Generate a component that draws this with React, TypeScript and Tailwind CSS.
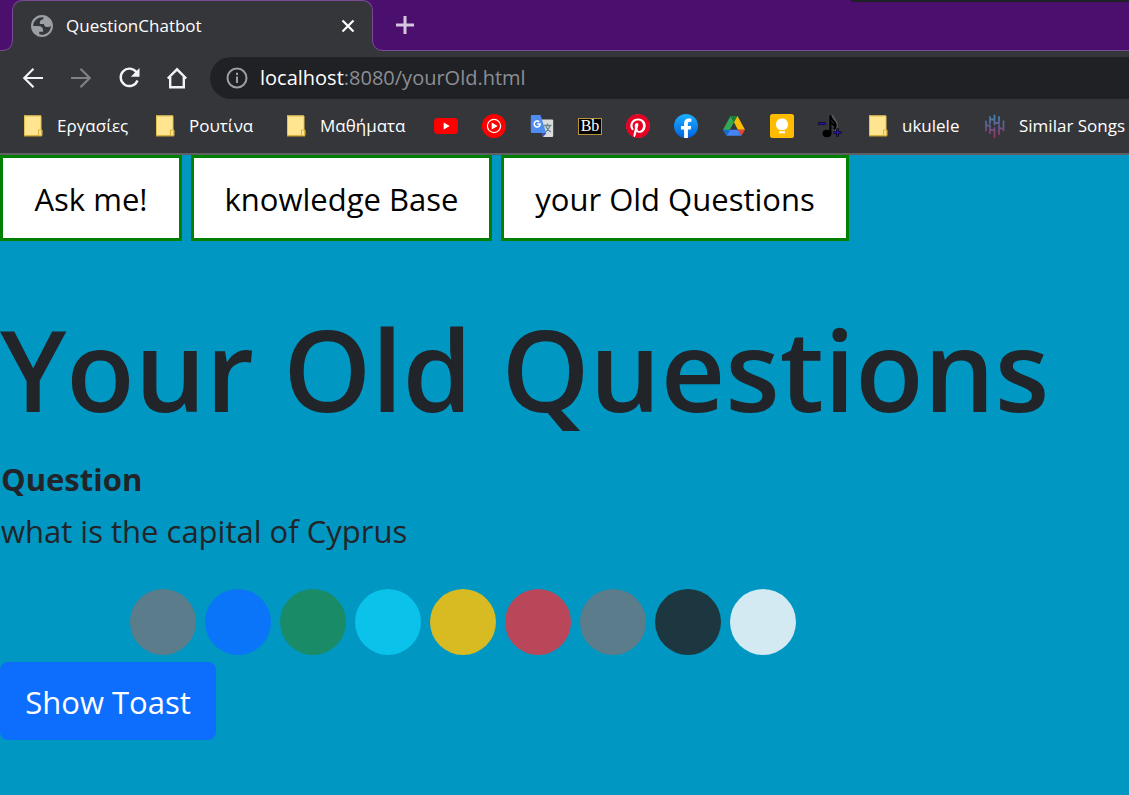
import type { ReactNode } from "react";

const uiFont = "font-['Open_Sans','Noto_Sans',sans-serif]";

function FolderIcon() {
  return (
    <svg className="size-6 shrink-0" viewBox="0 0 24 24" aria-hidden="true">
      <path d="M3 1.5h17v14.5l1 0v5.500H3z" fill="#ffe590" />
      <path d="M3.500 1.500V21.500H21V16h-1V2H3.500" fill="none" stroke="#e3c04f" strokeWidth="1" />
      <path d="M17.500 21.500V16h3v5.500" fill="#ffe590" stroke="#dcb23a" strokeWidth="1" />
      <path d="M3 22h18" stroke="#caa02e" strokeWidth="1" />
    </svg>
  );
}

function YoutubeIcon() {
  return (
    <svg className="size-6 shrink-0" viewBox="0 0 24 24" aria-hidden="true">
      <rect x="0" y="4" width="24" height="16" rx="4" fill="#f00" />
      <path d="M9.700 8.600v6.800l6-3.400z" fill="#fff" />
    </svg>
  );
}

function YoutubeMusicIcon() {
  return (
    <svg className="size-6 shrink-0" viewBox="0 0 24 24" aria-hidden="true">
      <circle cx="12" cy="12" r="12" fill="#f00" />
      <circle cx="12" cy="12" r="6.600" fill="none" stroke="#fff" strokeWidth="1.200" />
      <path d="M9.700 8.400v7.200l6-3.600z" fill="#fff" />
    </svg>
  );
}

function TranslateIcon() {
  return (
    <svg className="size-6 shrink-0" viewBox="0 0 24 24" aria-hidden="true">
      <path d="M10 5.500h12a1.200 1.200 0 0 1 1.200 1.200v15.100a1.200 1.200 0 0 1-1.200 1.200H13z" fill="#dcdcdc" />
      <path d="M12 19h4.500L13 23z" fill="#3a4fc4" />
      <path d="M13.500 11.500h8M17.500 9.500v2M20 11.500c-.5 2.800-2.400 4.800-4.500 6.500M16 12.500c.8 2 2.500 4 4.800 5.500" fill="none" stroke="#66858c" strokeWidth="1.300" />
      <path d="M2 1h8.500l5.700 18H2A1.200 1.200 0 0 1 .8 17.800V2.200A1.200 1.200 0 0 1 2 1z" fill="#4f8cf0" />
      <path d="M9.300 7.900A3 3 0 1 0 10.200 10H7.200" fill="none" stroke="#fff" strokeWidth="1.500" />
    </svg>
  );
}

function BlackboardIcon() {
  return (
    <span className="flex size-6 shrink-0 items-center">
      <span className="flex h-[17px] w-6 items-center justify-center border border-[#b99438] bg-black font-['Liberation_Serif',serif] text-base leading-none text-white">
        Bb
      </span>
    </span>
  );
}

function PinterestIcon() {
  return (
    <svg className="size-6 shrink-0" viewBox="0 0 24 24" aria-hidden="true">
      <circle cx="12" cy="12" r="11.500" fill="#fff" />
      <path
        d="M12.017 0C5.396 0 .029 5.367.029 11.987c0 5.079 3.158 9.417 7.618 11.162-.105-.949-.199-2.403.041-3.439.219-.937 1.406-5.957 1.406-5.957s-.359-.72-.359-1.781c0-1.663.967-2.911 2.168-2.911 1.024 0 1.518.769 1.518 1.688 0 1.029-.653 2.567-.992 3.992-.285 1.193.6 2.165 1.775 2.165 2.128 0 3.768-2.245 3.768-5.487 0-2.861-2.063-4.869-5.008-4.869-3.410 0-5.409 2.562-5.409 5.199 0 1.033.394 2.143.889 2.741.099.120.112.225.085.345-.090.375-.293 1.199-.334 1.363-.053.225-.172.271-.401.165-1.495-.690-2.433-2.878-2.433-4.646 0-3.776 2.748-7.252 7.920-7.252 4.158 0 7.392 2.967 7.392 6.923 0 4.135-2.607 7.462-6.233 7.462-1.214 0-2.354-.629-2.758-1.379l-.749 2.848c-.269 1.045-1.004 2.352-1.498 3.146 1.123.345 2.306.535 3.550.535 6.607 0 11.985-5.365 11.985-11.987C23.970 5.390 18.592.026 11.985.026z"
        fill="#e60023"
      />
    </svg>
  );
}

function FacebookIcon() {
  return (
    <svg className="size-6 shrink-0" viewBox="0 0 24 24" aria-hidden="true">
      <defs>
        <linearGradient id="fb" x1="0" y1="0" x2="0" y2="1">
          <stop offset="0" stopColor="#1aafff" />
          <stop offset="1" stopColor="#0163e0" />
        </linearGradient>
      </defs>
      <circle cx="12" cy="12" r="12" fill="url(#fb)" />
      <path d="M16.700 15.500l.5-3.500h-3.300V9.700c0-1 .5-1.900 2-1.900h1.500v-3s-1.400-.2-2.700-.2c-2.800 0-4.600 1.700-4.600 4.700V12H7v3.500h3.100v8.400a12 12 0 0 0 3.800 0v-8.400z" fill="#fff" />
    </svg>
  );
}

function DriveIcon() {
  return (
    <svg className="size-6 shrink-0" viewBox="0 0 24 24" aria-hidden="true">
      <path d="M8.500 2L12 8.300 4.500 21.500 1 15.700z" fill="#34a853" />
      <path d="M8.500 2h7L12 8.300z" fill="#188038" />
      <path d="M15.500 2L23 15.700h-7.100L12 8.300z" fill="#fbbc04" />
      <path d="M8 15.700h8l3.500 6H4.500z" fill="#4285f4" />
      <path d="M1 15.700h7l-3.500 6z" fill="#1967d2" />
      <path d="M15.900 15.700H23l-3.500 6z" fill="#ea4335" />
    </svg>
  );
}

function KeepIcon() {
  return (
    <svg className="size-6 shrink-0" viewBox="0 0 24 24" aria-hidden="true">
      <rect width="24" height="24" rx="2.500" fill="#ffbb00" />
      <path d="M12 4.500a6 6 0 0 0-3.200 11.100V16h6.400v-.4A6 6 0 0 0 12 4.500zM9 17.200h6v2H9z" fill="#fff" />
    </svg>
  );
}

function TransposeIcon() {
  return (
    <svg className="size-6 shrink-0" viewBox="0 0 24 24" aria-hidden="true">
      <path d="M13.500 1c.5 4 5 5.500 5 10 0 2.500-1 4-2.500 5.500" fill="none" stroke="#5c5d61" strokeWidth="3" />
      <path d="M11 .800h2.800v19H11z" fill="#000" stroke="#4d4e52" strokeWidth="0.500" />
      <path d="M13 3c1 4 4.800 4.500 4.800 8.500 0 2-1 3-2 4M13 8c1 2.500 3.500 2.500 4.500 5" fill="none" stroke="#000" strokeWidth="2" />
      <ellipse cx="9" cy="19.500" rx="4.500" ry="3.700" fill="#000" />
      <path d="M0 9.500h7.500M15.500 18.500h8M19.500 14.500v8" stroke="#000" strokeWidth="2.600" />
      <path d="M.5 9.500h6.500M16 18.500h7M19.500 15v7" stroke="#2b14b4" strokeWidth="1.400" />
    </svg>
  );
}

function SimilarSongsIcon() {
  return (
    <svg className="size-6 shrink-0" viewBox="0 0 24 24" aria-hidden="true">
      <defs>
        <linearGradient id="songs" gradientUnits="userSpaceOnUse" x1="0" y1="0" x2="0" y2="24">
          <stop offset="0" stopColor="#3f86b4" />
          <stop offset="0.500" stopColor="#5d5c8c" />
          <stop offset="1" stopColor="#a52a62" />
        </linearGradient>
      </defs>
      <path d="M3 7.500v9M7 3v6M7 12v7M11.500 1.500v9M11.500 14v9M16 3v5M16 11v9M20.500 7.500v9M3 11.500h4M7 5.500h4.500M11.500 9h4.500M7 16h4.500M16 14.500h4.500" stroke="url(#songs)" strokeWidth="1.800" strokeLinecap="round" fill="none" />
    </svg>
  );
}

type Bookmark = { name: string; icon: ReactNode; label?: string; width?: string };

const bookmarks: Bookmark[] = [
  { name: "Εργασίες", label: "Εργασίες", width: "w-[72px]", icon: <FolderIcon /> },
  { name: "Ρουτίνα", label: "Ρουτίνα", width: "w-[71px]", icon: <FolderIcon /> },
  { name: "Μαθήματα", label: "Μαθήματα", width: "w-[90px]", icon: <FolderIcon /> },
  { name: "YouTube", icon: <YoutubeIcon /> },
  { name: "YouTube Music", icon: <YoutubeMusicIcon /> },
  { name: "Google Translate", icon: <TranslateIcon /> },
  { name: "Blackboard", icon: <BlackboardIcon /> },
  { name: "Pinterest", icon: <PinterestIcon /> },
  { name: "Facebook", icon: <FacebookIcon /> },
  { name: "Google Drive", icon: <DriveIcon /> },
  { name: "Google Keep", icon: <KeepIcon /> },
  { name: "Transpose", icon: <TransposeIcon /> },
  { name: "ukulele", label: "ukulele", width: "w-[57px]", icon: <FolderIcon /> },
  { name: "Similar Songs", label: "Similar Songs", width: "w-[108px]", icon: <SimilarSongsIcon /> },
];

function TabStrip() {
  return (
    <div className="relative flex h-[51px] items-end border-b border-[#7b4a94] bg-[#4b0f6d]">
      <div className="absolute top-0 right-0 h-0.5 w-[278px] bg-[#202124]" />
      <div className="relative z-10 ml-3 -mb-px flex h-[51px] w-[361px] items-center rounded-t-[10px] border border-b-0 border-[#7b4a94] bg-[#35363a] pr-4 pl-[18px] text-white">
        <svg className="absolute bottom-0 -left-3 h-3 w-3" viewBox="0 0 12 12" aria-hidden="true">
          <path d="M0 12v-.5Q11.500 11.500 11.500 0H12v12z" fill="#35363a" />
          <path d="M0 11.500h1Q11.500 11.500 11.500 0" fill="none" stroke="#7b4a94" />
        </svg>
        <svg className="size-[22px] shrink-0" viewBox="2 2 20 20" aria-hidden="true">
          <path
            fillRule="evenodd"
            d="M12 2C6.486 2 2 6.486 2 12s4.486 10 10 10 10-4.486 10-10S17.514 2 12 2zM4 12h4.400c3.407.022 4.922 1.730 4.543 5.127H9.488v2.470a8.004 8.004 0 0 0 10.498-8.083C19.327 12.504 18.332 13 17 13c-2.137 0-3.206-.916-3.206-2.750h-3.748c-.274-2.728.683-4.092 2.870-4.092 0-.975.327-1.597.811-1.970A8.004 8.004 0 0 0 4 12z"
            fill="#9aa0a6"
          />
        </svg>
        <span className="ml-3 grow pl-px text-[17px] leading-6">QuestionChatbot</span>
        <button type="button" aria-label="Close tab" className="flex size-4 items-center justify-center">
          <svg className="size-4" viewBox="0 0 16 16" aria-hidden="true">
            <path d="M2.500 2.500l11 11M13.500 2.500l-11 11" stroke="#fff" strokeWidth="2.200" />
          </svg>
        </button>
        <svg className="absolute -right-3 bottom-0 h-3 w-3" viewBox="0 0 12 12" aria-hidden="true">
          <path d="M12 12v-.5Q.5 11.500 .5 0H0v12z" fill="#35363a" />
          <path d="M12 11.500h-1Q.5 11.500 .5 0" fill="none" stroke="#7b4a94" />
        </svg>
      </div>
      <button type="button" aria-label="New tab" className="ml-[22px] flex h-full w-5 items-center justify-center">
        <svg className="size-5" viewBox="0 0 20 20" aria-hidden="true">
          <path d="M10 1v18M1 10h18" stroke="#d6c6dd" strokeWidth="3" />
        </svg>
      </button>
    </div>
  );
}

function Toolbar() {
  return (
    <div className="flex h-[54px] items-center bg-[#35363a]">
      <nav aria-label="Navigation" className="flex gap-6 pl-[21px]">
        <button type="button" aria-label="Back">
          <svg className="size-6" viewBox="0 0 24 24" fill="none" stroke="#f1f3f4" strokeWidth="2.200" aria-hidden="true">
            <path d="M22 12H3.500M12.500 2.800L3.300 12l9.200 9.200" />
          </svg>
        </button>
        <button type="button" aria-label="Forward">
          <svg className="size-6" viewBox="0 0 24 24" fill="none" stroke="#808185" strokeWidth="2.200" aria-hidden="true">
            <path d="M2 12h18.500M11.500 2.800l9.200 9.200-9.200 9.200" />
          </svg>
        </button>
        <button type="button" aria-label="Reload">
          <svg className="size-6" viewBox="0 0 24 24" aria-hidden="true">
            <path d="M19.500 6.300A8.700 8.700 0 1 0 20.500 14.500" fill="none" stroke="#f1f3f4" strokeWidth="2.400" />
            <path d="M22.500 2v8.700h-8.700z" fill="#f1f3f4" />
          </svg>
        </button>
        <button type="button" aria-label="Home">
          <svg className="size-6" viewBox="0 0 24 24" fill="none" stroke="#f1f3f4" strokeWidth="2.400" aria-hidden="true">
            <path d="M2.800 12.500L12 3.300l9.200 9.200M5.200 11v10.200h13.600V11" />
          </svg>
        </button>
      </nav>
      <div className="ml-[21px] flex h-[42px] grow items-center rounded-l-full bg-[#202124] pl-4 text-xl whitespace-nowrap">
        <svg className="size-[22px]" viewBox="0 0 22 22" aria-hidden="true">
          <circle cx="11" cy="11" r="9.500" fill="none" stroke="#9aa0a6" strokeWidth="2" />
          <path d="M11 9.500v6.500M11 5.700v2.200" stroke="#9aa0a6" strokeWidth="2" />
        </svg>
        <span className="ml-3 text-white">localhost</span>
        <span className="text-[#8b8f94]">:8080/yourOld.html</span>
      </div>
    </div>
  );
}

function BookmarksBar() {
  return (
    <nav aria-label="Bookmarks" className="flex h-[50px] items-center gap-6 overflow-hidden border-b-2 border-[#5f6063] bg-[#35363a] pb-1.5 pl-[21px] text-[17px] leading-6 whitespace-nowrap text-white">
      {bookmarks.map((b) => (
        <a key={b.name} href="#" aria-label={b.name} className="flex shrink-0 items-center gap-3">
          {b.icon}
          {b.label && <span className={b.width}>{b.label}</span>}
        </a>
      ))}
    </nav>
  );
}

const pages = [
  { label: "Ask me!", width: "w-[182px]" },
  { label: "knowledge Base", width: "w-[301px]" },
  { label: "your Old Questions", width: "w-[348px]" },
];

const swatches = [
  { name: "secondary", color: "bg-[#5b7c8a]" },
  { name: "primary", color: "bg-[#0a75f8]" },
  { name: "success", color: "bg-[#198b66]" },
  { name: "info", color: "bg-[#0bc3ea]" },
  { name: "warning", color: "bg-[#d8ba22]" },
  { name: "danger", color: "bg-[#ba4659]" },
  { name: "muted", color: "bg-[#5b7c8a]" },
  { name: "dark", color: "bg-[#1d3741]" },
  { name: "light", color: "bg-[#d3eaf2]" },
];

export default function App() {
  return (
    <div className={`flex min-h-screen flex-col overflow-x-hidden bg-[#0097c2] ${uiFont}`}>
      <header>
        <TabStrip />
        <Toolbar />
        <BookmarksBar />
      </header>
      <main className="grow text-[31px] text-[#212529]">
        <nav aria-label="Pages" className="flex gap-[9px]">
          {pages.map((p) => (
            <button key={p.label} type="button" className={`h-[86px] shrink-0 border-3 border-[#008000] bg-white pt-0.5 whitespace-nowrap text-black ${p.width}`}>
              {p.label}
            </button>
          ))}
        </nav>
        <h1 className="mt-14 text-[112px] leading-[144px] font-semibold whitespace-nowrap">Your Old Questions</h1>
        <table className="mt-3 text-left leading-[52px]">
          <thead>
            <tr>
              <th scope="col" className="p-0 pl-px font-bold">Question</th>
            </tr>
          </thead>
          <tbody>
            <tr>
              <td className="p-0 pl-px">what is the capital of Cyprus</td>
            </tr>
          </tbody>
        </table>
        <div className="mt-8 flex gap-[9px] pl-[130px]">
          {swatches.map((s) => (
            <button key={s.name} type="button" aria-label={s.name} className={`size-[66px] shrink-0 rounded-full ${s.color}`} />
          ))}
        </div>
        <button type="button" className="mt-[7px] h-[78px] w-[216px] rounded-lg bg-[#0d6efd] pt-0.5 text-white">
          Show Toast
        </button>
      </main>
    </div>
  );
}
